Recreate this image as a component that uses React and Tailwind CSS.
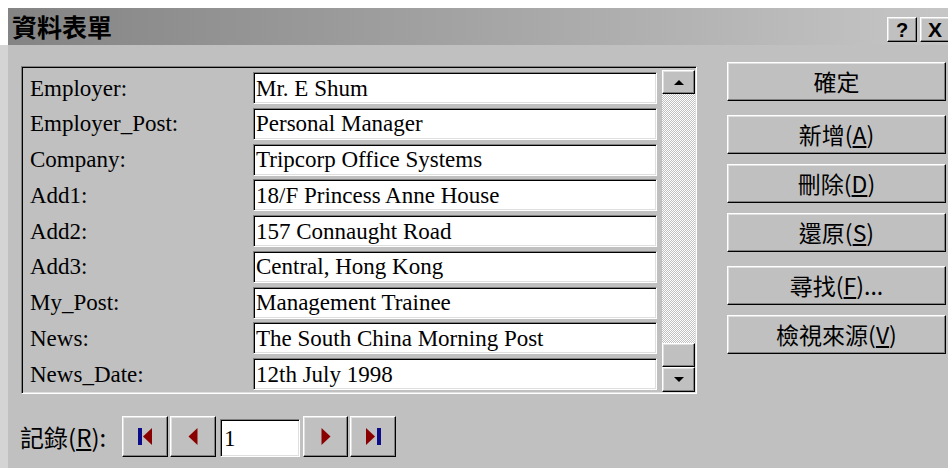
import React from "react";

const serif = "font-['Liberation_Serif','Noto_Sans_CJK_TC',serif]";
const cjk = "font-['Noto_Sans_CJK_TC','Noto_Sans_CJK_SC',sans-serif]";

// Win9x-style bevels
const raised =
  "bg-[#c0c0c0] border-t border-l border-r border-b border-t-white border-l-white border-r-black border-b-black shadow-[inset_-1px_-1px_#808080,inset_1px_1px_#dfdfdf]";
const sunken =
  "border-t border-l border-r border-b border-t-[#808080] border-l-[#808080] border-r-white border-b-white shadow-[inset_1px_1px_#000,inset_-1px_-1px_#dfdfdf]";

const records = [
  ["Employer:", "Mr. E Shum"],
  ["Employer_Post:", "Personal Manager"],
  ["Company:", "Tripcorp Office Systems"],
  ["Add1:", "18/F Princess Anne House"],
  ["Add2:", "157 Connaught Road"],
  ["Add3:", "Central, Hong Kong"],
  ["My_Post:", "Management Trainee"],
  ["News:", "The South China Morning Post"],
  ["News_Date:", "12th July 1998"],
];

function Mnemonic({ text, letter, suffix = "" }) {
  return (
    <span>
      {text}(<span className="underline underline-offset-2">{letter}</span>){suffix}
    </span>
  );
}

function TitleBar() {
  return (
    <div className="ml-2 h-[37px] flex bg-linear-to-r from-[#848484] to-[#c6c6c6]">
      <div className={`self-center pl-[4px] text-[25px] font-bold text-black leading-none ${cjk}`}>
        資料表單
      </div>
      <div className="ml-auto mr-[-2px] pt-[9px] flex gap-[3px]">
        <div
          className={`w-[30px] h-[25px] flex items-center justify-center text-[20px] font-bold leading-none font-['Liberation_Sans',sans-serif] ${raised}`}
        >
          ?
        </div>
        <div
          className={`w-[30px] h-[25px] flex items-center justify-center text-[21px] font-bold leading-none font-['Liberation_Sans',sans-serif] ${raised}`}
        >
          X
        </div>
      </div>
    </div>
  );
}

function ArrowUp() {
  return (
    <svg width="10" height="5" viewBox="0 0 10 5">
      <polygon points="5,0 10,5 0,5" fill="#000" />
    </svg>
  );
}

function ArrowDown() {
  return (
    <svg width="10" height="5" viewBox="0 0 10 5">
      <polygon points="0,0 10,0 5,5" fill="#000" />
    </svg>
  );
}

function ScrollBar() {
  return (
    <div className="ml-[5px] w-[33px] flex flex-col pt-[3px] pb-[1px]">
      <div className={`h-[24px] flex items-center justify-center ${raised}`}>
        <ArrowUp />
      </div>
      <div className="flex-1 bg-[repeating-conic-gradient(#c0c0c0_0%_25%,#ffffff_0%_50%)] bg-[length:2px_2px]" />
      <div className={`h-[24px] ${raised}`} />
      <div className={`h-[25px] flex items-center justify-center ${raised}`}>
        <ArrowDown />
      </div>
    </div>
  );
}

function RecordFrame() {
  return (
    <div className={`flex w-[676px] h-[328px] pr-[1px] ${sunken}`}>
      <div className="flex flex-col pl-[8px] pt-[5px] gap-[3.75px]">
        {records.map(([label, value]) => (
          <div key={label} className="flex h-[32px]">
            <div className={`w-[223px] flex items-center text-[23px] leading-none text-black ${serif}`}>
              {label}
            </div>
            <div
              className={`w-[404px] h-[32px] flex items-center pl-[2px] bg-white text-[23px] leading-none text-black ${serif} ${sunken}`}
            >
              {value}
            </div>
          </div>
        ))}
      </div>
      <ScrollBar />
    </div>
  );
}

const RED = "#8a0000";
const BLUE = "#0c0c8a";

function NavIcon({ kind }) {
  if (kind === "first")
    return (
      <svg width="15" height="17" viewBox="0 0 15 17">
        <rect x="0" y="0" width="4" height="17" fill={BLUE} />
        <polygon points="14,0 5,8.5 14,17" fill={RED} />
      </svg>
    );
  if (kind === "prev")
    return (
      <svg width="10" height="17" viewBox="0 0 10 17">
        <polygon points="9.5,0 0.5,8.5 9.5,17" fill={RED} />
      </svg>
    );
  if (kind === "next")
    return (
      <svg width="10" height="17" viewBox="0 0 10 17">
        <polygon points="0.5,0 9.5,8.5 0.5,17" fill={RED} />
      </svg>
    );
  return (
    <svg width="15" height="17" viewBox="0 0 15 17">
      <polygon points="0,0 9,8.5 0,17" fill={RED} />
      <rect x="11" y="0" width="4" height="17" fill={BLUE} />
    </svg>
  );
}

function NavRow() {
  return (
    <div className="mt-[22px] ml-[-1px] flex items-start">
      <div className={`w-[102px] h-[41px] flex items-center text-[24px] leading-none text-black ${cjk}`}>
        <Mnemonic text="記錄" letter="R" suffix=":" />
      </div>
      <div className={`w-[46px] h-[41px] flex items-center justify-center ${raised}`}>
        <NavIcon kind="first" />
      </div>
      <div className={`ml-[2px] w-[46px] h-[41px] flex items-center justify-center ${raised}`}>
        <NavIcon kind="prev" />
      </div>
      <div
        className={`ml-[4px] mt-[3px] w-[80px] h-[38px] flex items-center pl-[3px] bg-white text-[23px] leading-none text-black ${serif} ${sunken}`}
      >
        1
      </div>
      <div className={`ml-[3px] w-[45px] h-[41px] flex items-center justify-center ${raised}`}>
        <NavIcon kind="next" />
      </div>
      <div className={`ml-[2px] w-[46px] h-[41px] flex items-center justify-center ${raised}`}>
        <NavIcon kind="last" />
      </div>
    </div>
  );
}

function CmdButton({ children, className = "" }) {
  return (
    <div
      className={`w-[219px] h-[39px] flex items-center justify-center text-[23px] leading-none text-black ${cjk} ${raised} ${className}`}
    >
      {children}
    </div>
  );
}

export default function App() {
  return (
    <div className="w-[948px] h-[468px] overflow-hidden bg-white flex flex-col pt-2">
      <TitleBar />
      <div className="flex-1 flex border-l-8 border-l-[#d4d4d4] bg-[#c0c0c0]">
        <div className="flex flex-col pl-[13px] pt-[21px]">
          <RecordFrame />
          <NavRow />
        </div>
        <div className="ml-[30px] pt-[17px] flex flex-col">
          <CmdButton>確定</CmdButton>
          <CmdButton className="mt-[14px]">
            <Mnemonic text="新增" letter="A" />
          </CmdButton>
          <CmdButton className="mt-[10px]">
            <Mnemonic text="刪除" letter="D" />
          </CmdButton>
          <CmdButton className="mt-[10px]">
            <Mnemonic text="還原" letter="S" />
          </CmdButton>
          <CmdButton className="mt-[14px]">
            <Mnemonic text="尋找" letter="F" suffix="..." />
          </CmdButton>
          <CmdButton className="mt-[10px]">
            <Mnemonic text="檢視來源" letter="V" />
          </CmdButton>
        </div>
      </div>
    </div>
  );
}
